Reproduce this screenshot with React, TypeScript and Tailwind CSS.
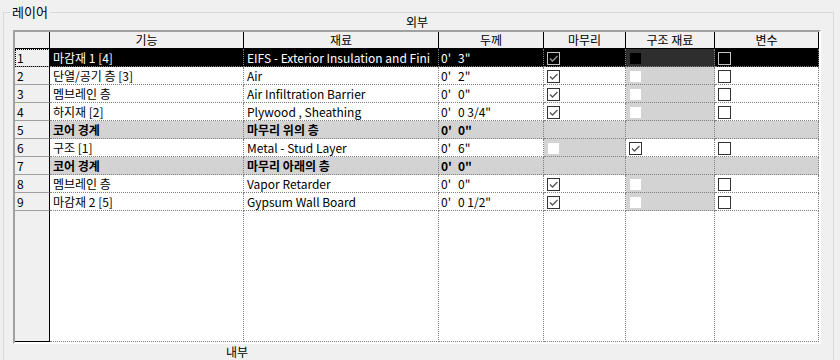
import React from "react";

type Box = "checked" | "unchecked" | "disabled" | "dark" | "none";

type Row = {
  n: number;
  f: string;
  m: string;
  t: string;
  fin: Box;
  str: Box;
  vr: Box;
  sel?: boolean;
  core?: boolean;
};

const rows: Row[] = [
  { n: 1, f: "마감재 1 [4]", m: "EIFS - Exterior Insulation and Fini", t: '3"', fin: "checked", str: "dark", vr: "unchecked", sel: true },
  { n: 2, f: "단열/공기 층 [3]", m: "Air", t: '2"', fin: "checked", str: "disabled", vr: "unchecked" },
  { n: 3, f: "멤브레인 층", m: "Air Infiltration Barrier", t: '0"', fin: "checked", str: "disabled", vr: "unchecked" },
  { n: 4, f: "하지재 [2]", m: "Plywood , Sheathing", t: '0 3/4"', fin: "checked", str: "disabled", vr: "unchecked" },
  { n: 5, f: "코어 경계", m: "마무리 위의 층", t: '0"', fin: "none", str: "none", vr: "none", core: true },
  { n: 6, f: "구조 [1]", m: "Metal - Stud Layer", t: '6"', fin: "disabled", str: "checked", vr: "unchecked" },
  { n: 7, f: "코어 경계", m: "마무리 아래의 층", t: '0"', fin: "none", str: "none", vr: "none", core: true },
  { n: 8, f: "멤브레인 층", m: "Vapor Retarder", t: '0"', fin: "checked", str: "disabled", vr: "unchecked" },
  { n: 9, f: "마감재 2 [5]", m: "Gypsum Wall Board", t: '0 1/2"', fin: "checked", str: "disabled", vr: "unchecked" },
];

const headers = ["기능", "재료", "두께", "마무리", "구조 재료", "변수"];

function CheckBox({ kind, sel }: { kind: Box; sel?: boolean }) {
  if (kind === "none") return null;
  if (kind === "disabled") {
    return <div className="mt-[1px] ml-[1px] w-[11px] h-[11px] bg-white" />;
  }
  if (kind === "dark") {
    return <div className="mt-[1px] ml-[1px] w-[11px] h-[11px] bg-black" />;
  }
  return (
    <div
      className={
        sel
          ? "w-[13px] h-[13px] border border-[#c4c4c4] bg-black"
          : "w-[13px] h-[13px] border border-[#333333] bg-white"
      }
    >
      {kind === "checked" && (
        <svg width="11" height="11" viewBox="0 0 11 11">
          <polyline
            points="2,5.5 4.5,8 9.5,3"
            fill="none"
            stroke={sel ? "#9a9a9a" : "#555555"}
            strokeWidth="1.3"
          />
        </svg>
      )}
    </div>
  );
}

function DataRow({ r }: { r: Row }) {
  const rowBg = r.sel ? "bg-black text-white" : r.core ? "bg-[#d3d3d3] text-black font-bold" : "bg-white text-black";
  const finBg = r.fin === "disabled" ? "bg-[#d3d3d3]" : "";
  const strBg = r.sel ? "bg-[#2e2e2e]" : r.str === "disabled" ? "bg-[#d3d3d3]" : "";
  return (
    <div className={"grid grid-cols-[35px_194px_195px_105px_82px_89px_104px] h-[18px] leading-none " + rowBg}>
      <div
        className={
          r.sel
            ? "bg-[#f0f0f0] text-black font-normal border-r border-r-black border-b border-b-[#a0a0a0] flex items-center pl-[2px] outline outline-1 outline-dotted outline-black -outline-offset-1"
            : "bg-[#f0f0f0] text-black font-normal border-r border-r-black border-b border-b-[#a0a0a0] flex items-center pl-[2px]"
        }
      >
        {r.n}
      </div>
      <div className="border-r border-b border-dotted border-[#808080] flex items-center pl-[3px] whitespace-pre overflow-hidden">
        {r.f}
      </div>
      <div className="border-r border-b border-dotted border-[#808080] flex items-center pl-[3px] whitespace-pre overflow-hidden">
        {r.m}
      </div>
      <div className="border-r border-b border-dotted border-[#808080] flex items-center pl-[2px] whitespace-pre overflow-hidden">
        <span className="w-[17px]">0'</span>
        <span>{r.t}</span>
      </div>
      <div className={"border-r border-b border-dotted border-[#808080] pl-[3px] pt-[3px] " + finBg}>
        <CheckBox kind={r.fin} sel={r.sel} />
      </div>
      <div className={"border-r border-b border-dotted border-[#808080] pl-[3px] pt-[3px] " + strBg}>
        <CheckBox kind={r.str} sel={r.sel} />
      </div>
      <div className="border-r border-b border-dotted border-[#808080] pl-[3px] pt-[3px]">
        <CheckBox kind={r.vr} sel={r.sel} />
      </div>
    </div>
  );
}

export default function App() {
  return (
    <div className="w-[840px] h-[360px] overflow-hidden bg-[#f0f0f0] font-['Noto_Sans_CJK_KR',sans-serif] text-[12px] text-black pt-[12px] pl-[3px]">
      <div className="relative w-[831px] h-[360px] border border-b-0 border-[#d9d9d9]">
        <span className="absolute left-[6px] -top-[10px] bg-[#f0f0f0] px-[2px] text-[13px] leading-[17px]">레이어</span>
        <div className="h-[17px] ml-[9px] w-[808px] flex items-center justify-center leading-none">외부</div>
        <div className="ml-[9px] w-[808px] h-[314px] flex flex-col border-2 border-t-[#a0a0a0] border-l-[#a0a0a0] border-r-white border-b-white">
          <div className="grid grid-cols-[35px_194px_195px_105px_82px_89px_104px] h-[17px] bg-[#f0f0f0] leading-none">
            <div className="border-r border-b border-black" />
            {headers.map((h) => (
              <div key={h} className="border-r border-b border-black flex items-center justify-center">
                {h}
              </div>
            ))}
          </div>
          {rows.map((r) => (
            <DataRow key={r.n} r={r} />
          ))}
          <div className="grid grid-cols-[35px_194px_195px_105px_82px_89px_104px] flex-1 bg-white">
            <div className="bg-[#f0f0f0] border-r border-b border-black" />
            <div className="border-r border-b border-dotted border-[#808080]" />
            <div className="border-r border-b border-dotted border-[#808080]" />
            <div className="border-r border-b border-dotted border-[#808080]" />
            <div className="border-r border-b border-dotted border-[#808080]" />
            <div className="border-r border-b border-dotted border-[#808080]" />
            <div className="border-r border-b border-dotted border-[#808080]" />
          </div>
        </div>
        <div className="pl-[222px] h-[16px] flex items-center leading-none">내부</div>
      </div>
    </div>
  );
}
